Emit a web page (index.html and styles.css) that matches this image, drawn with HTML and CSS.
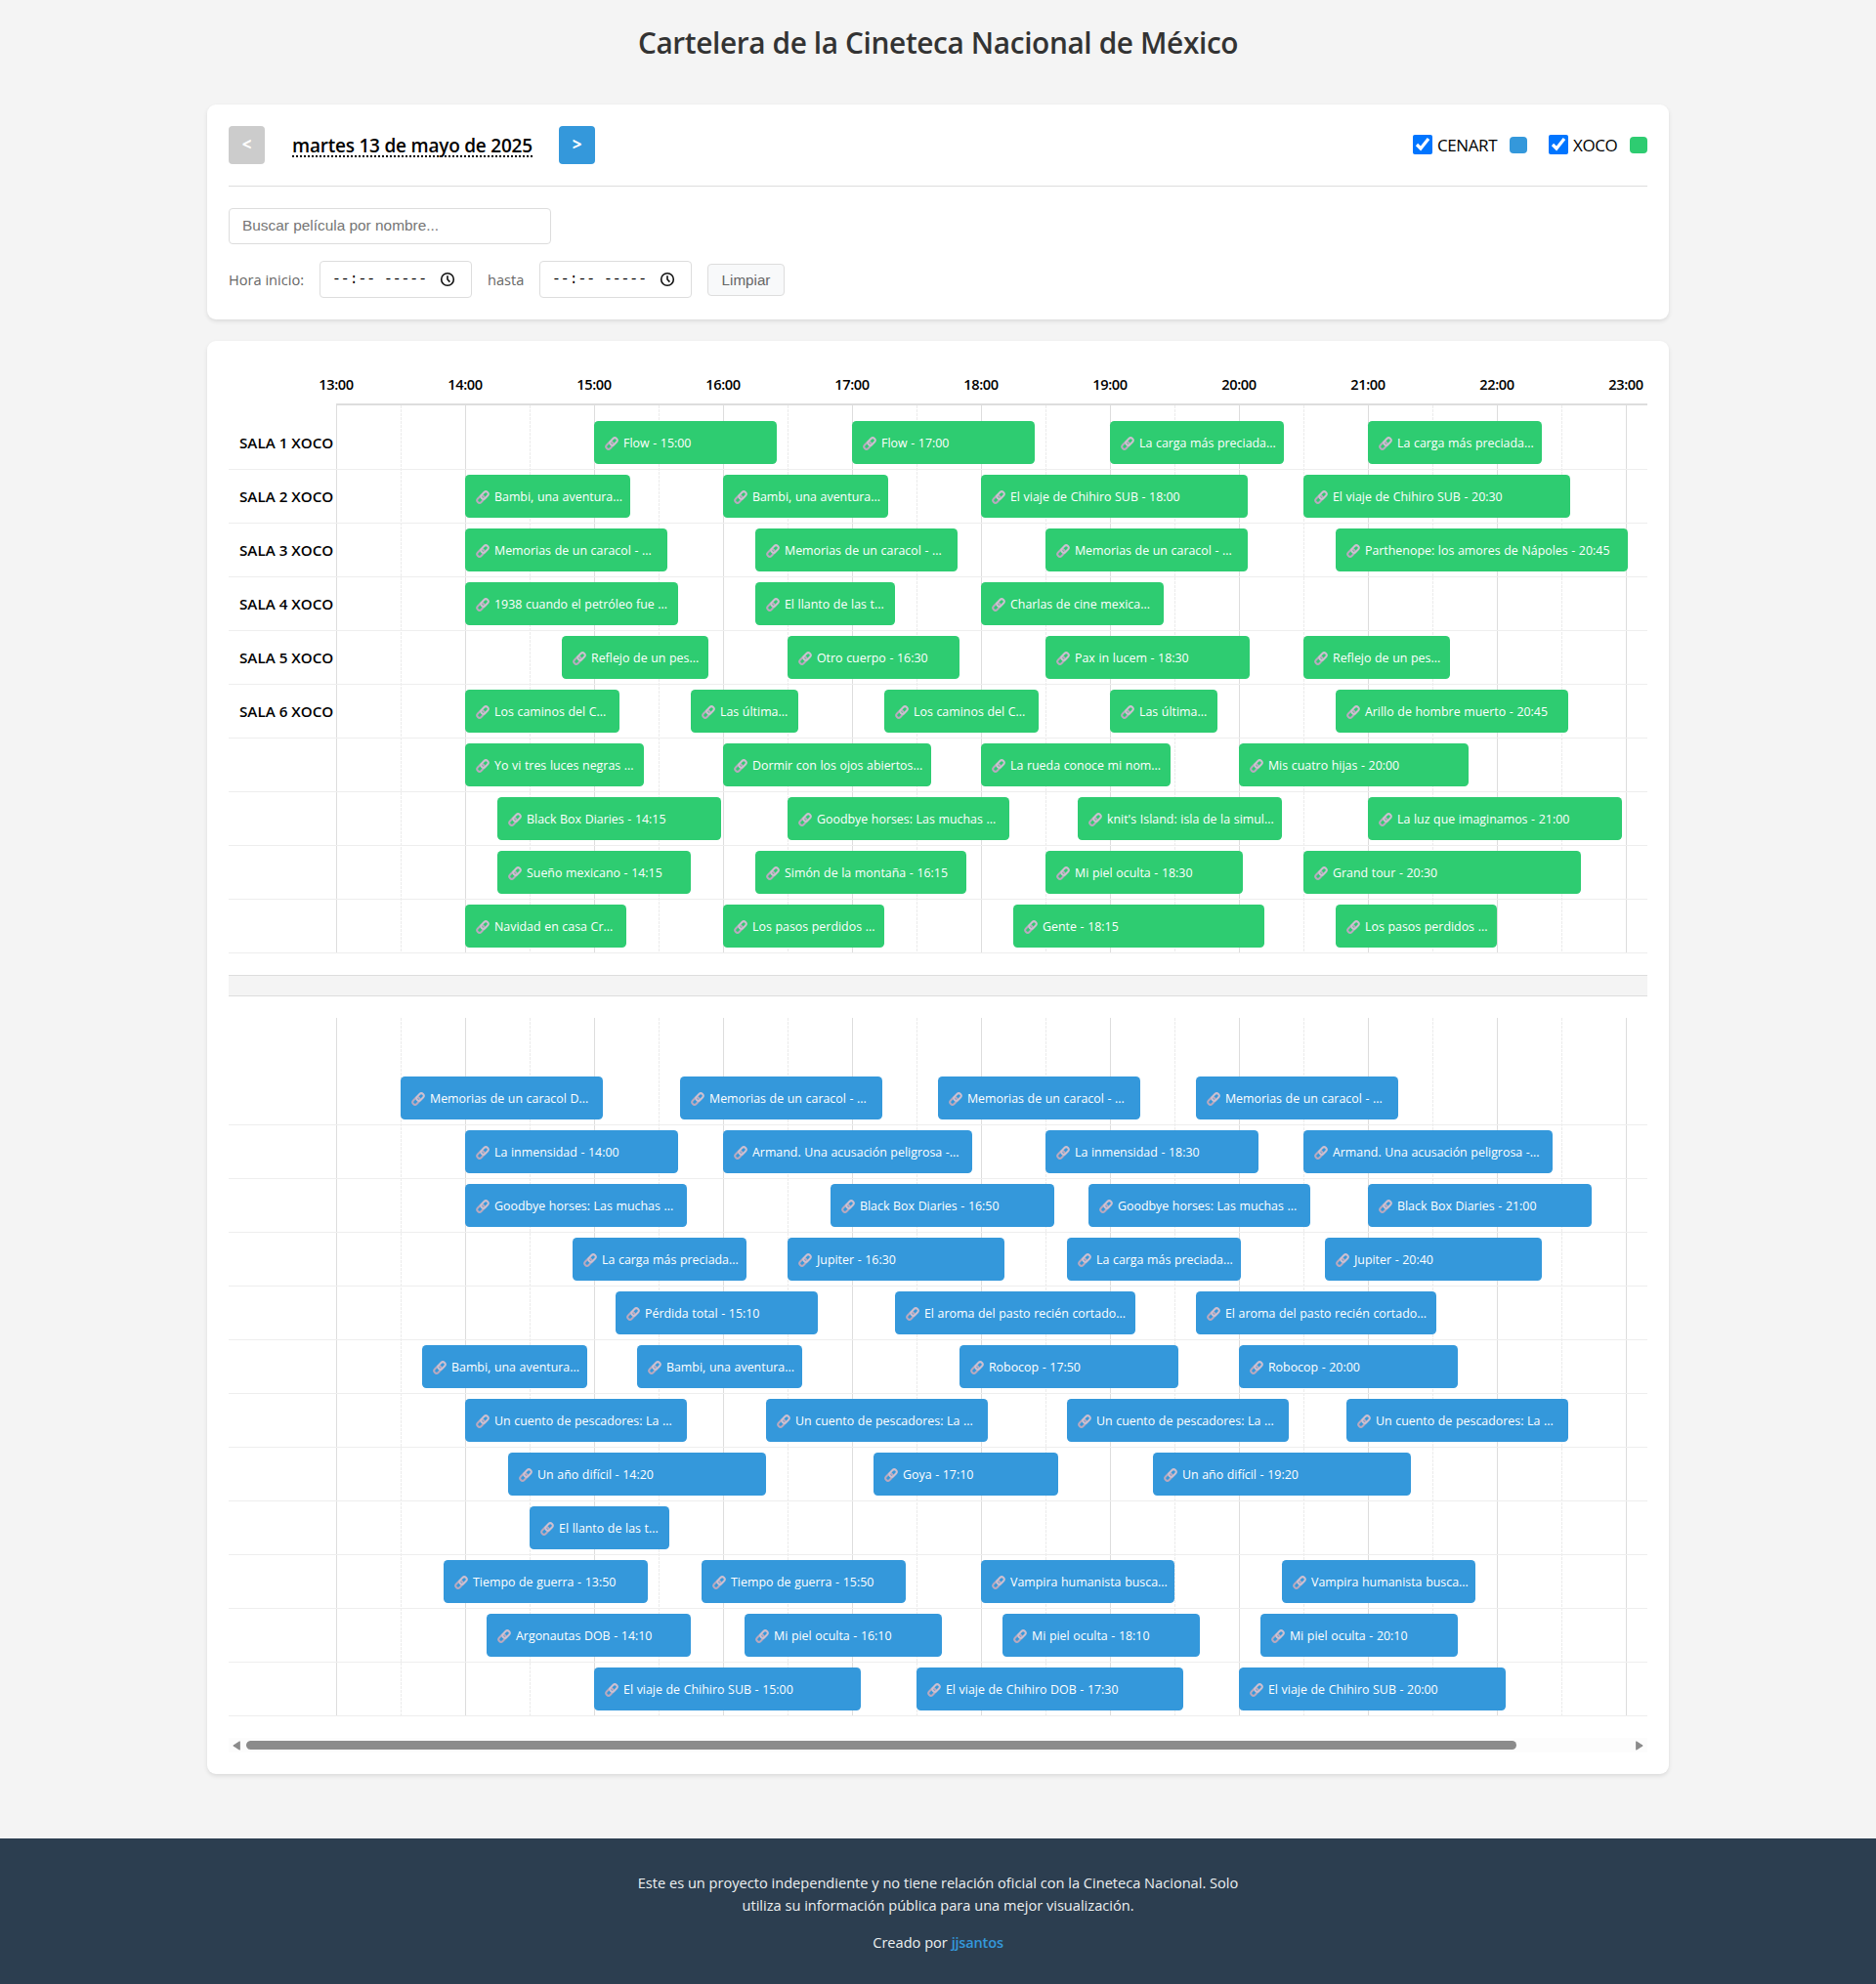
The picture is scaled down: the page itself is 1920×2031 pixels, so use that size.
FILE: index.html
```html
<!DOCTYPE html>
<html lang="es">
<head>
<meta charset="utf-8">
<title>Cartelera de la Cineteca Nacional de México</title>
<link rel="stylesheet" href="styles.css">
</head>
<body>
<svg class="defs" width="0" height="0">
  <symbol id="link" viewBox="0 0 14 14">
    <g fill="none" stroke-width="2">
      <rect x="-4.2" y="-2.5" width="8.4" height="5" rx="2.5" transform="translate(5 9) rotate(-45)" stroke="#b9a9bf"/>
      <rect x="-4.2" y="-2.5" width="8.4" height="5" rx="2.5" transform="translate(9 5) rotate(-45)" stroke="#cdbfd0"/>
    </g>
  </symbol>
</svg>
<header class="page-head"><h1>Cartelera de la Cineteca Nacional de México</h1></header>
<main class="container">
  <section class="card controls">
    <div class="top-row">
      <div class="date-nav">
        <button class="nav-btn" disabled>&lt;</button>
        <span class="date">martes 13 de mayo de 2025</span>
        <button class="nav-btn">&gt;</button>
      </div>
      <div class="legend">
        <label class="legend-item"><input type="checkbox" checked><span class="cenart-label">CENART</span><i class="swatch cenart"></i></label>
        <label class="legend-item"><input type="checkbox" checked><span class="xoco-label">XOCO</span><i class="swatch xoco"></i></label>
      </div>
    </div>
    <input class="search" type="text" placeholder="Buscar película por nombre...">
    <div class="time-row">
      <span class="lbl lbl-start">Hora inicio:</span>
      <span class="time-input"><span class="mask">--:-- -----</span><svg class="clock" viewBox="0 0 16 16"><circle cx="8" cy="8" r="6.3"/><path d="M8 4.2V8l2.4 2.6"/></svg></span>
      <span class="lbl lbl-to">hasta</span>
      <span class="time-input"><span class="mask">--:-- -----</span><svg class="clock" viewBox="0 0 16 16"><circle cx="8" cy="8" r="6.3"/><path d="M8 4.2V8l2.4 2.6"/></svg></span>
      <button class="clear">Limpiar</button>
    </div>
  </section>
  <section class="card board">
    <div class="hours" id="hours"></div>
    <div class="venue venue-xoco" id="xoco"></div>
    <div class="divider"></div>
    <div class="venue venue-cenart" id="cenart"></div>
    <div class="scrollbar">
      <svg class="arrow" viewBox="0 0 8 10"><path d="M7.3 .8v8.4L.8 5z"/></svg>
      <div class="thumb"></div>
      <svg class="arrow arrow-right" viewBox="0 0 8 10"><path d="M.7 .8v8.4L7.2 5z"/></svg>
    </div>
  </section>
</main>
<footer class="footer">
  <p class="note">Este es un proyecto independiente y no tiene relación oficial con la Cineteca Nacional. Solo<br>utiliza su información pública para una mejor visualización.</p>
  <p class="credit">Creado por <a>jjsantos</a></p>
</footer>
<script src="app.js"></script>
</body>
</html>
```
FILE: styles.css
```css
* { box-sizing: border-box; }
body {
  margin: 0;
  background: #f4f4f4;
  color: #000;
  font-family: "Open Sans", "Noto Sans", sans-serif;
  font-size: 16px;
}
.defs { display: block; position: absolute; }
.page-head { height: 107px; padding-top: 22px; text-align: center; }
h1 {
  margin: 0;
  color: #333;
  font-size: 29.8px;
  line-height: 44px;
  font-weight: 600;
  letter-spacing: -0.37px;
  white-space: nowrap;
}
.container { width: 1496px; margin: 0 auto; }
.card {
  background: #fff;
  border-radius: 9px;
  padding: 22px;
  box-shadow: 0 2px 4px rgba(0, 0, 0, .1);
}
.controls { height: 220px; margin-bottom: 22px; }
.top-row {
  display: flex;
  justify-content: space-between;
  height: 62px;
  border-bottom: 1px solid #ddd;
}
.date-nav { display: flex; align-items: flex-start; }
.nav-btn {
  width: 37px;
  height: 39px;
  padding: 0 0 3px;
  border: 0;
  border-radius: 4px;
  background: #3498db;
  color: #fff;
  font: 700 17px "Open Sans", sans-serif;
}
.nav-btn:disabled { background: #ccc; }
.date {
  width: 246px;
  height: 24px;
  margin: 8px 27px 0 28px;
  border-bottom: 2px dotted #000;
  font-size: 19px;
  font-weight: 600;
  line-height: 24px;
  letter-spacing: -0.22px;
  white-space: nowrap;
}
.legend { display: flex; gap: 22px; height: 39px; align-items: center; }
.legend-item { display: flex; align-items: center; font-size: 17px; }
.legend-item input { width: 20px; height: 20px; margin: 0 5px 2px 0; accent-color: #0075ff; }
.cenart-label { width: 64px; letter-spacing: -0.4px; margin-right: 10px; }
.xoco-label { width: 48px; letter-spacing: -0.4px; margin-right: 10px; }
.swatch { width: 18px; height: 17px; border-radius: 4px; }
.cenart { background: #3498db; }
.xoco { background: #2ecc71; }
.search {
  display: block;
  width: 330px;
  height: 37px;
  margin: 22px 0 17px;
  padding: 0 13px 2px;
  border: 1px solid #ddd;
  border-radius: 4px;
  font: 15.4px "Liberation Sans", Arial, sans-serif;
}
.search::placeholder { color: #757575; }
.time-row { display: flex; align-items: center; height: 38px; }
.lbl { color: #666; font-size: 14.6px; white-space: nowrap; }
.lbl-start { width: 93px; }
.lbl-to { width: 53px; margin-left: 16px; }
.time-input {
  display: flex;
  align-items: center;
  width: 156px;
  height: 38px;
  padding: 0 16px 0 12px;
  border: 1px solid #ddd;
  border-radius: 4px;
  justify-content: space-between;
}
.mask { font: 14.7px "Liberation Mono", monospace; white-space: pre; }
.clock { width: 16px; height: 16px; fill: none; stroke: #111; stroke-width: 1.6; }
.clear {
  width: 79px;
  height: 33px;
  margin-left: 16px;
  padding: 0;
  border: 1px solid #ddd;
  border-radius: 4px;
  background: #f8f9fa;
  color: #666;
  font: 15.2px "Liberation Sans", Arial, sans-serif;
}
.board { height: 1467px; }
.hours {
  display: grid;
  grid-template-columns: repeat(11, 132px);
  width: 1452px;
  height: 44px;
  margin-left: 44px;
  padding-top: 11px;
  font-size: 14.6px;
  font-weight: 600;
  line-height: 22px;
  letter-spacing: -0.4px;
  text-align: center;
}
.venue {
  --hour-line: linear-gradient(90deg, #ddd 1px, transparent 1px);
  --dash-gap: repeating-linear-gradient(180deg, transparent 0 3px, #fff 3px 4px);
  --half-line: linear-gradient(90deg, #ebebeb 1px, transparent 1px);
  background:
    var(--hour-line) 110px 0 / 132px 100%,
    var(--dash-gap),
    var(--half-line) 176px 0 / 132px 100%;
  position: relative;
}
/* keeps the room-name column free of grid lines */
.venue::before {
  content: "";
  position: absolute;
  top: 0;
  left: 0;
  width: 110px;
  height: 100%;
  background: #fff;
}
.venue-xoco::after {
  content: "";
  position: absolute;
  top: -2px;
  left: 110px;
  right: 0;
  height: 2px;
  background: #ddd;
}
.venue-xoco { padding-top: 11px; }
.venue-cenart { padding-top: 55px; }
.room {
  position: relative;
  display: flex;
  height: 55px;
  padding-top: 5px;
  border-bottom: 1px solid #eee;
}
.room-name {
  flex: none;
  width: 110px;
  padding-left: 11px;
  font-size: 15.2px;
  font-weight: 600;
  line-height: 45px;
  letter-spacing: 0;
  white-space: nowrap;
}
.show {
  flex: none;
  display: flex;
  align-items: center;
  height: 44px;
  padding-left: 11px;
  border-radius: 4.4px;
  color: #fff;
  font-size: 12.4px;
  line-height: 44px;
  word-spacing: .4px;
  white-space: nowrap;
}
.venue-xoco .show { background: #2ecc71; }
.venue-cenart .show { background: #3498db; }
.show svg { flex: none; width: 14px; height: 14px; margin: 2px 5px 0 0; }
.show span { padding-top: 2px; }
.divider {
  height: 22px;
  margin: 22px 0;
  background: #f4f4f4;
  border: solid #ddd;
  border-width: 1px 0;
}
.scrollbar {
  display: flex;
  align-items: center;
  height: 15px;
  margin-top: 22px;
  padding: 0 4px;
  background: #fcfcfc;
}
.arrow { width: 8px; height: 10px; fill: #8b8b8b; stroke: #8b8b8b; stroke-linejoin: round; }
.arrow-right { margin-left: auto; }
.thumb { width: 1300px; height: 9px; margin-left: 6px; border-radius: 5px; background: #8b8b8b; }
.footer {
  height: 149px;
  margin-top: 66px;
  padding-top: 34px;
  background: #2c3e50;
  color: #ecf0f1;
  font-size: 14.6px;
  line-height: 23px;
  text-align: center;
  white-space: nowrap;
}
.footer p { margin: 0; }
.footer .credit { margin-top: 15px; }
.footer a { color: #3498db; font-weight: 600; letter-spacing: -0.2px; }
```
FILE: app.js
```js
// Each show: [start "HH:MM", minutes, label]
const XOCO = [
  [["15:00",85,"Flow - 15:00"],["17:00",85,"Flow - 17:00"],["19:00",81,"La carga más preciada..."],["21:00",81,"La carga más preciada..."]],
  [["14:00",77,"Bambi, una aventura..."],["16:00",77,"Bambi, una aventura..."],["18:00",124,"El viaje de Chihiro SUB - 18:00"],["20:30",124,"El viaje de Chihiro SUB - 20:30"]],
  [["14:00",94,"Memorias de un caracol - ..."],["16:15",94,"Memorias de un caracol - ..."],["18:30",94,"Memorias de un caracol - ..."],["20:45",136,"Parthenope: los amores de Nápoles - 20:45"]],
  [["14:00",99,"1938 cuando el petróleo fue ..."],["16:15",65,"El llanto de las t..."],["18:00",85,"Charlas de cine mexica..."]],
  [["14:45",68,"Reflejo de un pes..."],["16:30",80,"Otro cuerpo - 16:30"],["18:30",95,"Pax in lucem - 18:30"],["20:30",68,"Reflejo de un pes..."]],
  [["14:00",72,"Los caminos del C..."],["15:45",50,"Las última..."],["17:15",72,"Los caminos del C..."],["19:00",50,"Las última..."],["20:45",108,"Arillo de hombre muerto - 20:45"]],
  [["14:00",83,"Yo vi tres luces negras ..."],["16:00",97,"Dormir con los ojos abiertos..."],["18:00",88,"La rueda conoce mi nom..."],["20:00",107,"Mis cuatro hijas - 20:00"]],
  [["14:15",104,"Black Box Diaries - 14:15"],["16:30",103,"Goodbye horses: Las muchas ..."],["18:45",95,"knit's Island: isla de la simul..."],["21:00",118,"La luz que imaginamos - 21:00"]],
  [["14:15",90,"Sueño mexicano - 14:15"],["16:15",98,"Simón de la montaña - 16:15"],["18:30",92,"Mi piel oculta - 18:30"],["20:30",129,"Grand tour - 20:30"]],
  [["14:00",75,"Navidad en casa Cr..."],["16:00",75,"Los pasos perdidos ..."],["18:15",117,"Gente - 18:15"],["20:45",75,"Los pasos perdidos ..."]]
];
const CENART = [
  [["13:30",94,"Memorias de un caracol D..."],["15:40",94,"Memorias de un caracol - ..."],["17:40",94,"Memorias de un caracol - ..."],["19:40",94,"Memorias de un caracol - ..."]],
  [["14:00",99,"La inmensidad - 14:00"],["16:00",116,"Armand. Una acusación peligrosa -..."],["18:30",99,"La inmensidad - 18:30"],["20:30",116,"Armand. Una acusación peligrosa -..."]],
  [["14:00",103,"Goodbye horses: Las muchas ..."],["16:50",104,"Black Box Diaries - 16:50"],["18:50",103,"Goodbye horses: Las muchas ..."],["21:00",104,"Black Box Diaries - 21:00"]],
  [["14:50",81,"La carga más preciada..."],["16:30",101,"Jupiter - 16:30"],["18:40",81,"La carga más preciada..."],["20:40",101,"Jupiter - 20:40"]],
  [["15:10",94,"Pérdida total - 15:10"],["17:20",112,"El aroma del pasto recién cortado..."],["19:40",112,"El aroma del pasto recién cortado..."]],
  [["13:40",77,"Bambi, una aventura..."],["15:20",77,"Bambi, una aventura..."],["17:50",102,"Robocop - 17:50"],["20:00",102,"Robocop - 20:00"]],
  [["14:00",103,"Un cuento de pescadores: La ..."],["16:20",103,"Un cuento de pescadores: La ..."],["18:40",103,"Un cuento de pescadores: La ..."],["20:50",103,"Un cuento de pescadores: La ..."]],
  [["14:20",120,"Un año difícil - 14:20"],["17:10",86,"Goya - 17:10"],["19:20",120,"Un año difícil - 19:20"]],
  [["14:30",65,"El llanto de las t..."]],
  [["13:50",95,"Tiempo de guerra - 13:50"],["15:50",95,"Tiempo de guerra - 15:50"],["18:00",90,"Vampira humanista busca..."],["20:20",90,"Vampira humanista busca..."]],
  [["14:10",95,"Argonautas DOB - 14:10"],["16:10",92,"Mi piel oculta - 16:10"],["18:10",92,"Mi piel oculta - 18:10"],["20:10",92,"Mi piel oculta - 20:10"]],
  [["15:00",124,"El viaje de Chihiro SUB - 15:00"],["17:30",124,"El viaje de Chihiro DOB - 17:30"],["20:00",124,"El viaje de Chihiro SUB - 20:00"]]
];
const FIRST_HOUR = 13;
const PX_PER_MIN = 2.2;

function minutes(start) {
  const [h, m] = start.split(":").map(Number);
  return (h - FIRST_HOUR) * 60 + m;
}

function renderShows(shows) {
  let end = 0;
  return shows.map(([start, mins, label]) => {
    const gap = ((minutes(start) - end) * PX_PER_MIN).toFixed(1);
    end = minutes(start) + mins;
    const width = (mins * PX_PER_MIN).toFixed(1);
    return `<div class="show" style="margin-left:${gap}px;width:${width}px"><svg><use href="#link"/></svg><span>${label}</span></div>`;
  }).join("");
}

function render(id, rows, names) {
  document.getElementById(id).innerHTML = rows.map((shows, i) =>
    `<div class="room"><span class="room-name">${names[i] || ""}</span>${renderShows(shows)}</div>`
  ).join("");
}

document.getElementById("hours").innerHTML =
  Array.from({ length: 11 }, (_, i) => `<span>${FIRST_HOUR + i}:00</span>`).join("");
render("xoco", XOCO, [1, 2, 3, 4, 5, 6].map(n => `SALA ${n} XOCO`));
render("cenart", CENART, []);
```
